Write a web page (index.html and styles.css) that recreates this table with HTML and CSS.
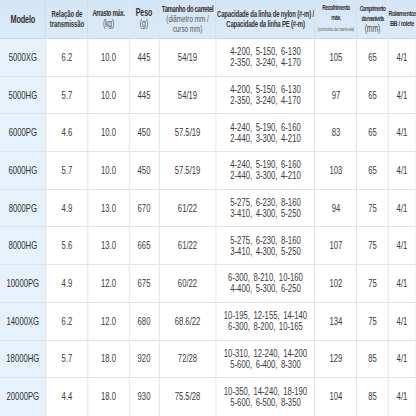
FILE: index.html
```html
<!DOCTYPE html>
<html lang="pt">

<head>
    <meta charset="UTF-8">
    <meta name="viewport" content="width=device-width, initial-scale=1.0">
    <title>Especificações</title>
    <link rel="stylesheet" href="styles.css">
</head>

<body>
    <table class="specs">
        <colgroup>
            <col class="c-model">
            <col class="c-ratio">
            <col class="c-drag">
            <col class="c-weight">
            <col class="c-spool">
            <col class="c-line">
            <col class="c-retrieve">
            <col class="c-handle">
            <col class="c-bearing">
        </colgroup>
        <thead>
            <tr>
                <th class="h-model">Modelo</th>
                <th class="h-ratio">Relação de<br>transmissão</th>
                <th class="h-drag">Arrasto máx.<br><span class="unit">(kg)</span></th>
                <th class="h-weight">Peso<br><span class="unit">(g)</span></th>
                <th class="h-spool">Tamanho do carretel<br><span class="sub">(diâmetro mm /<br>curso mm)</span></th>
                <th class="h-line">Capacidade da linha de nylon (#-m) /<br>Capacidade da linha PE (#-m)</th>
                <th class="h-retrieve">Recolhimento<br>máx.<br><span class="tiny">(cm/volta da manivela)</span></th>
                <th class="h-handle"><span class="small">Comprimento<br>da manivela</span><br><span class="unit">(mm)</span></th>
                <th class="h-bearing">Rolamentos<br>BB / rolete</th>
            </tr>
        </thead>
        <tbody>
            <tr>
                <td class="model">5000XG</td><td>6.2</td><td>10.0</td><td>445</td><td>54/19</td>
                <td class="line">4-200, 5-150, 6-130<br>2-350, 3-240, 4-170</td><td>105</td><td>65</td><td>4/1</td>
            </tr>
            <tr>
                <td class="model">5000HG</td><td>5.7</td><td>10.0</td><td>445</td><td>54/19</td>
                <td class="line">4-200, 5-150, 6-130<br>2-350, 3-240, 4-170</td><td>97</td><td>65</td><td>4/1</td>
            </tr>
            <tr>
                <td class="model">6000PG</td><td>4.6</td><td>10.0</td><td>450</td><td>57.5/19</td>
                <td class="line">4-240, 5-190, 6-160<br>2-440, 3-300, 4-210</td><td>83</td><td>65</td><td>4/1</td>
            </tr>
            <tr>
                <td class="model">6000HG</td><td>5.7</td><td>10.0</td><td>450</td><td>57.5/19</td>
                <td class="line">4-240, 5-190, 6-160<br>2-440, 3-300, 4-210</td><td>103</td><td>65</td><td>4/1</td>
            </tr>
            <tr>
                <td class="model">8000PG</td><td>4.9</td><td>13.0</td><td>670</td><td>61/22</td>
                <td class="line">5-275, 6-230, 8-160<br>3-410, 4-300, 5-250</td><td>94</td><td>75</td><td>4/1</td>
            </tr>
            <tr>
                <td class="model">8000HG</td><td>5.6</td><td>13.0</td><td>665</td><td>61/22</td>
                <td class="line">5-275, 6-230, 8-160<br>3-410, 4-300, 5-250</td><td>107</td><td>75</td><td>4/1</td>
            </tr>
            <tr>
                <td class="model">10000PG</td><td>4.9</td><td>12.0</td><td>675</td><td>60/22</td>
                <td class="line">6-300, 8-210, 10-160<br>4-400, 5-300, 6-250</td><td>102</td><td>75</td><td>4/1</td>
            </tr>
            <tr>
                <td class="model">14000XG</td><td>6.2</td><td>12.0</td><td>680</td><td>68.6/22</td>
                <td class="line">10-195, 12-155, 14-140<br>6-300, 8-200, 10-165</td><td>134</td><td>75</td><td>4/1</td>
            </tr>
            <tr>
                <td class="model">18000HG</td><td>5.7</td><td>18.0</td><td>920</td><td>72/28</td>
                <td class="line">10-310, 12-240, 14-200<br>5-600, 6-400, 8-300</td><td>129</td><td>85</td><td>4/1</td>
            </tr>
            <tr class="last">
                <td class="model">20000PG</td><td>4.4</td><td>18.0</td><td>930</td><td>75.5/28</td>
                <td class="line">10-350, 14-240, 18-190<br>5-600, 6-500, 8-350</td><td>104</td><td>85</td><td>4/1</td>
            </tr>
            <tr class="filler">
                <td class="model"></td><td></td><td></td><td></td><td></td><td></td><td></td><td></td><td></td>
            </tr>
        </tbody>
    </table>
</body>

</html>
```

FILE: styles.css
```css
body {
    margin: 0;
    background-color: #fff;
    font-family: 'Liberation Sans', Arial, sans-serif;
    color: #3a3a3a;
    overflow: hidden;
}

/* the sheet uses a condensed face: squeeze the whole table */
.specs {
    width: 594.3px;
    table-layout: fixed;
    border-collapse: collapse;
    transform: scaleX(0.7);
    transform-origin: 0 0;
}

.c-model { width: 65.7px; }
.c-ratio { width: 60px; }
.c-drag { width: 58.6px; }
.c-weight { width: 42.9px; }
.c-spool { width: 81.4px; }
.c-line { width: 141.4px; }
.c-retrieve { width: 60px; }
.c-handle { width: 44.3px; }
.c-bearing { width: 40px; }

.specs th {
    height: 38px;
    padding: 0;
    background: linear-gradient(#d4e5f5, #dbeaf8);
    border-right: 1px solid #c2d4e6;
    border-bottom: 1px solid #cbdaea;
    font-size: 8.5px;
    font-weight: bold;
    line-height: 10px;
    color: #333;
    text-align: center;
    vertical-align: middle;
    white-space: nowrap;
    overflow: hidden;
}

.specs th .unit {
    font-weight: normal;
    font-size: 10px;
    line-height: 12px;
    color: #555;
}

.specs th .sub {
    font-weight: normal;
    font-size: 9px;
    color: #555;
}

.h-model {
    font-size: 10.5px !important;
    letter-spacing: -0.3px;
}

.h-ratio {
    letter-spacing: -0.1px;
}

.h-drag {
    letter-spacing: -0.5px;
}

.h-drag .unit {
    letter-spacing: -0.3px;
}

.h-weight {
    font-size: 10px !important;
}

.h-spool {
    letter-spacing: -0.5px;
}

.h-spool .sub {
    letter-spacing: 0;
}

.h-line {
    letter-spacing: -0.25px;
}

.h-retrieve {
    font-size: 7.2px !important;
    letter-spacing: -0.7px;
}

.h-retrieve .tiny {
    font-weight: normal;
    font-size: 5.6px;
    letter-spacing: -0.2px;
    line-height: 12px;
    color: #666;
}

.h-handle .small {
    font-size: 7px;
    line-height: 8px;
    letter-spacing: -0.8px;
}

.h-handle .unit {
    letter-spacing: -0.3px;
}

.h-bearing {
    font-size: 8px !important;
    letter-spacing: -0.5px;
}

.specs td {
    height: 36.7px;
    padding: 0;
    border-right: 1px solid #d8d8d8;
    border-bottom: 1px solid #e4e4e4;
    font-size: 11px;
    line-height: 11px;
    text-align: center;
    vertical-align: middle;
    white-space: nowrap;
}

.specs td.line {
    line-height: 11px;
    word-spacing: 2px;
}

.specs td.model {
    background-color: #e6f1fc;
    color: #2e2e2e;
}

.specs tr.last td {
    border-bottom: none;
}

.specs tr.filler td {
    height: 40px;
}
```
